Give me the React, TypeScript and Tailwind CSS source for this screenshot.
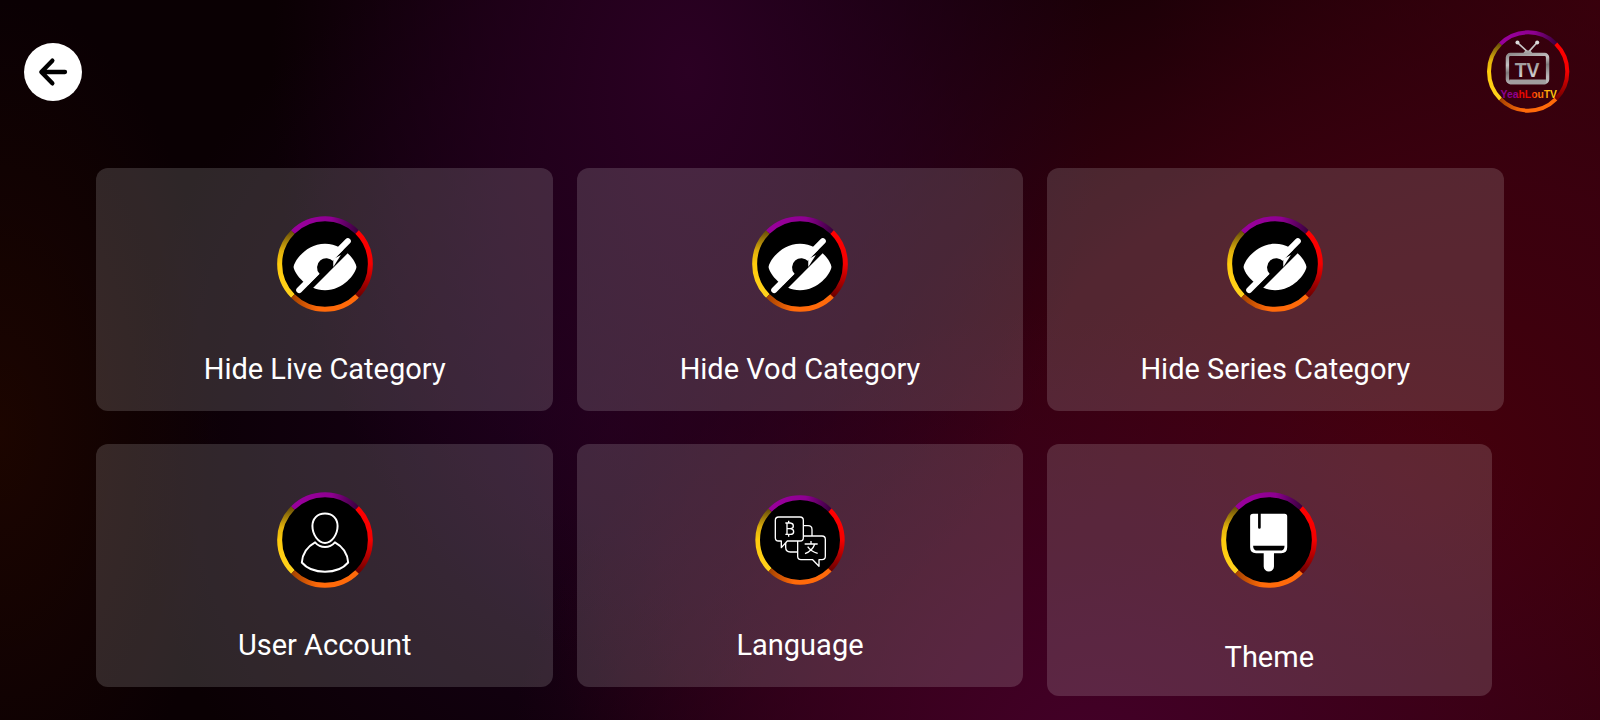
import { useId, type ReactNode } from "react";

function Ring({ cx, cy, r, width }: { cx: number; cy: number; r: number; width: number }) {
  const id = useId();
  const d = r * Math.SQRT1_2;
  const left = cx - d;
  const right = cx + d;
  const top = cy - d;
  const bottom = cy + d;
  const arc = (x1: number, y1: number, x2: number, y2: number) =>
    `M${x1} ${y1}A${r} ${r} 0 0 1 ${x2} ${y2}`;
  return (
    <g fill="none" strokeWidth={width}>
      <defs>
        <linearGradient id={`${id}p`} gradientUnits="userSpaceOnUse" x1={left} y1="0" x2={right} y2="0">
          <stop offset="0.1" stopColor="#98009b" />
          <stop offset="0.6" stopColor="#8e0091" />
          <stop offset="1" stopColor="#3c0040" />
        </linearGradient>
        <linearGradient id={`${id}r`} gradientUnits="userSpaceOnUse" x1="0" y1={top} x2="0" y2={bottom}>
          <stop offset="0" stopColor="#ff0000" />
          <stop offset="0.5" stopColor="#f40000" />
          <stop offset="1" stopColor="#6e0000" />
        </linearGradient>
        <linearGradient id={`${id}o`} gradientUnits="userSpaceOnUse" x1={left} y1="0" x2={right} y2="0">
          <stop offset="0" stopColor="#a84400" />
          <stop offset="0.4" stopColor="#ff6a0a" />
          <stop offset="1" stopColor="#ff6a0a" />
        </linearGradient>
        <linearGradient id={`${id}y`} gradientUnits="userSpaceOnUse" x1="0" y1={top} x2="0" y2={bottom}>
          <stop offset="0" stopColor="#6b5208" />
          <stop offset="0.3" stopColor="#e0b00c" />
          <stop offset="0.5" stopColor="#ffcb0c" />
          <stop offset="1" stopColor="#ffd21c" />
        </linearGradient>
      </defs>
      <path d={arc(left, bottom, left, top)} stroke={`url(#${id}y)`} />
      <path d={arc(left, top, right, top)} stroke={`url(#${id}p)`} />
      <path d={arc(right, top, right, bottom)} stroke={`url(#${id}r)`} />
      <path d={arc(right, bottom, left, bottom)} stroke={`url(#${id}o)`} />
    </g>
  );
}

function Badge({ children }: { children: ReactNode }) {
  return (
    <svg viewBox="35 33 290 290" className="size-24" aria-hidden="true">
      <circle cx="180" cy="178" r="138" fill="#000" />
      <Ring cx={180} cy={178} r={137} width={15} />
      {children}
    </svg>
  );
}

function HiddenEyeIcon() {
  return (
    <Badge>
      <path d="M85 187C88 166 125 117 180 117s92 49 95 70c-3 21-40 70-95 70s-92-49-95-70Z" fill="#fff" />
      <path d="M128 254L264 118" stroke="#000" strokeWidth="17" />
      <path d="M102 257L249 109" stroke="#fff" strokeWidth="18" strokeLinecap="round" />
      <path d="M163 207A25 25 0 1 1 205 170L180 195L170 215Z" fill="#000" />
      <path d="M205 163V187L228 151Z" fill="#fff" />
    </Badge>
  );
}

function UserIcon() {
  return (
    <Badge>
      <g fill="none" stroke="#fff" strokeWidth="6" strokeLinejoin="round">
        <path d="M180 98c24 0 38 16 38 38 0 26-18 51-38 51s-38-25-38-51c0-22 14-38 38-38Z" />
        <path d="M150 185c-22 12-38 32-40 61 15 18 42 28 70 28s55-10 70-28c-2-29-18-49-40-61-8 9-18 14-30 14s-22-5-30-14Z" />
      </g>
    </Badge>
  );
}

function LanguageIcon() {
  return (
    <svg viewBox="46 46 270 270" className="size-[90px]" aria-hidden="true">
      <circle cx="181" cy="181" r="128" fill="#000" />
      <Ring cx={181} cy={181} r={127} width={14} />
      <g fill="none" stroke="#fff" strokeWidth="4" strokeLinejoin="round">
        <path d="M117 112H181Q191 112 191 122V174Q191 184 181 184H143L125 204V184H117Q107 184 107 174V122Q107 112 117 112Z" />
        <path d="M191 138H205Q217 138 217 150V169" />
        <path d="M174 217H152Q138 217 138 203V190" />
        <path d="M191 169H247Q257 169 257 179V230Q257 240 247 240H238V260L219 240H184Q174 240 174 230V184" />
      </g>
      <g fill="none" stroke="#fff" strokeWidth="4">
        <path d="M137 130H152Q161 131 161 139T152 147H142M152 147Q162 148 162 156T152 164H137M142 130V164M147 123V130M147 164V171" />
        <path d="M195 193H234M214 184V193M225 194Q218 214 196 222M204 201Q214 216 234 221" />
      </g>
    </svg>
  );
}

function BrushIcon() {
  return (
    <Badge>
      <path d="M132 99H227Q235 99 235 107V200Q235 218 217 218H195V258A15 15 0 0 1 164 258V218H141Q123 218 123 200V107Q123 99 132 99Z" fill="#fff" />
      <path d="M147 96H155V140Q155 144 151 144T147 140ZM132 195H227Q227 210 213 210H146Q132 210 132 195Z" fill="#000" />
    </Badge>
  );
}

function Logo() {
  return (
    <svg viewBox="51 31 248 248" className="size-[83px]" role="img" aria-label="YeahLouTV">
      <defs>
        <linearGradient id="metal" x1="0" y1="0" x2="0.3" y2="1">
          <stop offset="0" stopColor="#8f8b8c" />
          <stop offset="0.35" stopColor="#c4c1c2" />
          <stop offset="0.6" stopColor="#7d797a" />
          <stop offset="1" stopColor="#bab7b8" />
        </linearGradient>
        <linearGradient id="letters" x1="0" y1="0" x2="0" y2="1">
          <stop offset="0" stopColor="#8b8788" />
          <stop offset="1" stopColor="#e2e0e1" />
        </linearGradient>
        <linearGradient id="word" gradientUnits="userSpaceOnUse" x1="93" y1="0" x2="259" y2="0">
          <stop offset="0" stopColor="#8d0092" />
          <stop offset="0.28" stopColor="#8d0092" />
          <stop offset="0.32" stopColor="#ea0800" />
          <stop offset="0.55" stopColor="#ea0800" />
          <stop offset="0.62" stopColor="#ff6208" />
          <stop offset="0.76" stopColor="#ff7a08" />
          <stop offset="0.86" stopColor="#ffc90c" />
          <stop offset="1" stopColor="#ffc90c" />
        </linearGradient>
      </defs>
      <Ring cx={174} cy={155} r={117} width={12} />
      <path d="M174 98L142 69M174 98L200 69" stroke="#c9c7c8" strokeWidth="5" />
      <circle cx="142" cy="68" r="6" fill="#dcdadb" />
      <circle cx="201" cy="68" r="6" fill="#dcdadb" />
      <path d="M159 102Q161 92 173 92T187 102Z" fill="#aaa7a8" />
      <rect x="112" y="104" width="120" height="84" rx="9" fill="none" stroke="url(#metal)" strokeWidth="10" />
      <path d="M118 186H227" stroke="#a19e9f" strokeWidth="14" />
      <text
        x="171"
        y="170"
        textAnchor="middle"
        fill="url(#letters)"
        className="font-['Liberation_Sans',sans-serif] text-[58px] font-bold"
      >
        TV
      </text>
      <text
        x="176"
        y="233"
        textAnchor="middle"
        fill="url(#word)"
        className="font-['Liberation_Sans',sans-serif] text-[31px] font-bold"
      >
        YeahLouTV
      </text>
    </svg>
  );
}

const cards = [
  { label: "Hide Live Category", icon: <HiddenEyeIcon />, box: "mr-3 pb-6", text: "mt-[39px]" },
  { label: "Hide Vod Category", icon: <HiddenEyeIcon />, box: "mx-3 pb-6", text: "mt-[39px]" },
  { label: "Hide Series Category", icon: <HiddenEyeIcon />, box: "ml-3 pb-6", text: "mt-[39px]" },
  { label: "User Account", icon: <UserIcon />, box: "mr-3 pb-6", text: "mt-[39px]" },
  { label: "Language", icon: <LanguageIcon />, box: "mx-3 pb-6", text: "mt-[39px]" },
  { label: "Theme", icon: <BrushIcon />, box: "mx-3 pb-[21px]", text: "mt-[51px]" },
];

export default function App() {
  return (
    <div className="min-h-screen bg-[#0a0003] bg-[radial-gradient(ellipse_14%_60%_at_0%_60%,#1c0500_0%,transparent_100%),radial-gradient(ellipse_26%_85%_at_43%_10%,#2b0023_0%,#28002199_50%,transparent_100%),radial-gradient(ellipse_36%_62%_at_68%_105%,#430028_0%,#3f002499_50%,transparent_100%),radial-gradient(ellipse_56%_95%_at_88%_66%,#46000c_0%,#400010cc_45%,transparent_100%),radial-gradient(ellipse_28%_70%_at_100%_0%,#320009_0%,transparent_100%),radial-gradient(ellipse_30%_70%_at_38%_60%,#1a001c_0%,transparent_100%)] pb-6 font-['Roboto',sans-serif] text-white">
      <header className="flex items-center justify-between pt-[30px] pr-[30px] pl-6">
        <button type="button" aria-label="Back" className="rounded-full">
          <svg viewBox="42 39 174 174" className="size-[58px]" aria-hidden="true">
            <circle cx="129" cy="126" r="87" fill="#fff" />
            <path
              d="M165 126H95M127 92L94 126L127 160"
              fill="none"
              stroke="#000"
              strokeWidth="13"
              strokeLinecap="round"
              strokeLinejoin="round"
            />
          </svg>
        </button>
        <Logo />
      </header>
      <main className="mx-24 mt-[55px] grid grid-cols-3 items-start gap-y-[33px]">
        {cards.map((card) => (
          <button
            key={card.label}
            type="button"
            className={`flex flex-col items-center rounded-xl bg-white/15 pt-12 ${card.box}`}
          >
            <span className="flex size-24 items-center justify-center">{card.icon}</span>
            <span className={`text-[29px] leading-9 ${card.text}`}>{card.label}</span>
          </button>
        ))}
      </main>
    </div>
  );
}
